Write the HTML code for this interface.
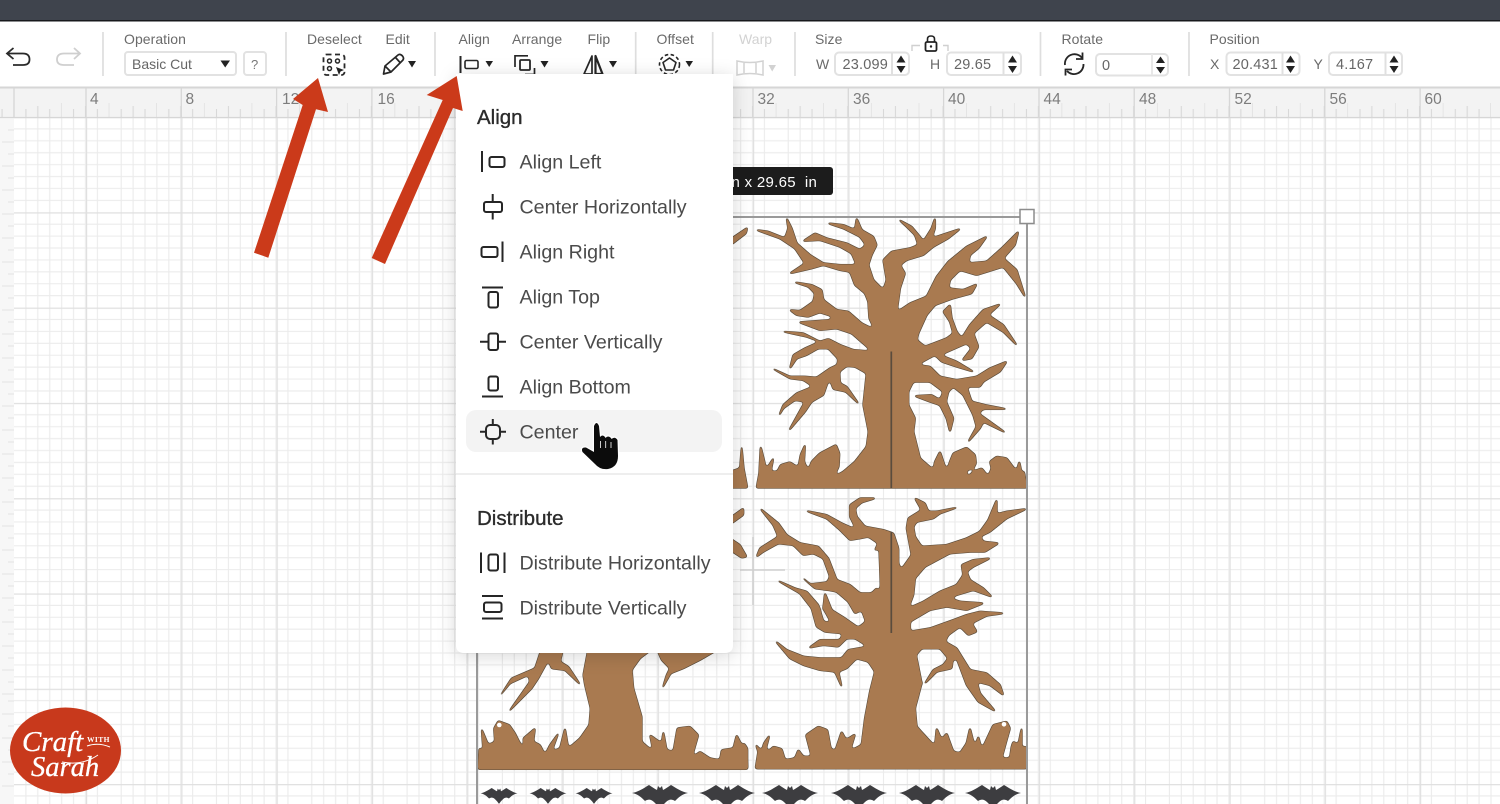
<!DOCTYPE html>
<html><head><meta charset="utf-8"><style>
html,body{margin:0;padding:0;background:#fff;width:1500px;height:804px;overflow:hidden}
svg{display:block;position:absolute;left:0;top:0}
text{font-family:"Liberation Sans",sans-serif}
.l{font-size:14px;letter-spacing:.05px;fill:#6a6a6a}
.v{font-size:14.5px;fill:#666;letter-spacing:.2px}
.r{font-size:15.5px;fill:#7d7d7d}
.m{font-size:19.65px;fill:#4b4b4b}
.t{font-size:20.5px;fill:#2b2b2b;stroke:#2b2b2b;stroke-width:.35px}
.ic{fill:none;stroke:#262626;stroke-width:2}
.box{fill:#fff;stroke:#e2e2e2;stroke-width:2}
.dv{stroke:#dedede;stroke-width:1.7}
</style></head><body>
<svg width="1500" height="804" viewBox="0 0 1500 804" xmlns="http://www.w3.org/2000/svg">
<defs>
<pattern id="g" x="14" y="117" width="95.29" height="95.29" patternUnits="userSpaceOnUse">
<path d="M11.91 0V96M23.82 0V96M35.73 0V96M47.64 0V96M59.56 0V96M71.47 0V96M83.38 0V96M0 11.91H96M0 23.82H96M0 35.73H96M0 47.64H96M0 59.56H96M0 71.47H96M0 83.38H96" stroke="#ebebeb" stroke-width="1.1" fill="none"/>
</pattern>
<pattern id="G" x="86" y="117" width="95.29" height="95.29" patternUnits="userSpaceOnUse">
<path d="M0.6 0V96M0 0.6H96" stroke="#e0e0e0" stroke-width="1.2" fill="none"/>
</pattern>
<pattern id="t" x="14" y="88" width="47.645" height="30" patternUnits="userSpaceOnUse">
<path d="M11.91 21V30M23.82 18V30M35.73 21V30M47.64 15V30" stroke="#d8d8d8" stroke-width="1.1" fill="none"/>
</pattern>
<path id="bat" d="M-28 8C-22 7-16 3-11 0C-8 2-5 4-3 5L-2 1L0 3L2 1L3 5C5 4 8 2 11 0C16 3 22 7 28 8C22 9 18 13 15 16C12 14 9 14 6 17L3 20L0 24L-3 20L-6 17C-9 14-12 14-15 16C-18 13-22 9-28 8Z" fill="#3d3d40"/>
<filter id="sm" x="440" y="190" width="610" height="600" filterUnits="userSpaceOnUse" color-interpolation-filters="sRGB">
<feGaussianBlur in="SourceAlpha" stdDeviation="1.3" result="b"/>
<feComponentTransfer in="b" result="a"><feFuncA type="linear" slope="7" intercept="-2.6"/></feComponentTransfer>
<feFlood flood-color="#56493a" result="dk"/>
<feComposite in="dk" in2="a" operator="in" result="outline"/>
<feMorphology in="a" operator="erode" radius="0.7" result="e"/>
<feFlood flood-color="#a97a50" result="br"/>
<feComposite in="br" in2="e" operator="in" result="body"/>
<feMerge><feMergeNode in="outline"/><feMergeNode in="body"/></feMerge>
</filter>
</defs>

<rect width="1500" height="804" fill="#fff"/>
<rect y="117" width="1500" height="687" fill="url(#g)"/>
<rect y="117" width="1500" height="687" fill="url(#G)"/>
<rect x="0" y="118" width="14" height="686" fill="#f7f7f7"/>
<path d="M8 130H14M2 142H14M8 154H14M2 166H14M8 178H14M2 190H14M8 202H14M2 214H14M8 226H14M2 238H14M8 250H14M2 262H14M8 274H14M2 286H14M8 298H14M2 310H14M8 322H14M2 334H14M8 346H14M2 358H14M8 370H14M2 382H14M8 394H14M2 406H14M8 418H14M2 430H14M8 442H14M2 454H14M8 466H14M2 478H14M8 490H14M2 502H14M8 514H14M2 526H14M8 538H14M2 550H14M8 562H14M2 574H14M8 586H14M2 598H14M8 610H14M2 622H14M8 634H14M2 646H14M8 658H14M2 670H14M8 682H14M2 694H14M8 701H14M2 714H14M8 726H14M2 738H14M8 750H14M2 762H14M8 774H14M2 786H14" stroke="#e3e3e3" stroke-width="1"/>

<path d="M753 537V605M740 570H785" stroke="#cfcfcf" stroke-width="1.4" fill="none"/>

<!-- Trees -->
<g filter="url(#sm)" fill="#a97a50" stroke="#a97a50" stroke-width="1.8" stroke-linejoin="round">
<g transform="translate(740 205) scale(.3333)">
<path stroke-width="5.500" d="M50 848L58 805L62 725L72 765L78 795L100 760L92 800L112 800L122 780L150 772L175 788L182 750L195 720L192 770L205 798L215 770L240 745L288 720L298 745L296 785L280 818L310 800L345 770L380 725L386 680L370 600L380 505L345 485L320 483L298 500L300 535L320 545L355 595L318 560L280 552L268 518L250 570L215 590L195 620L148 675L195 590L165 585L130 610L118 630L130 600L170 565L220 545L190 525L150 520L100 492L150 515L195 515L230 518L270 490L292 480L295 462L265 430L235 430L200 450L170 460L150 490L160 450L195 430L240 410L200 395L130 380L190 385L240 410L265 402L300 420L340 435L398 440L375 420L335 385L290 370L240 375L178 352L270 345L280 335L240 322L205 335L170 330L150 315L180 318L220 290L225 265L205 245L165 232L215 240L245 255L250 285L290 315L325 320L365 355L405 375L388 340L385 290L375 265L345 240L330 200L300 195L250 180L215 190L150 205L195 175L165 130L120 100L50 75L85 80L135 100L145 70L140 40L155 70L170 115L210 150L250 175L300 180L350 180L335 145L300 125L240 105L190 108L225 85L260 100L320 115L360 135L378 120L360 95L310 70L265 55L310 60L345 75L350 40L365 75L400 95L410 120L395 150L385 180L400 225L430 255L440 225L430 165L455 140L510 130L535 120L525 90L500 65L478 45L515 65L540 95L550 110L575 70L585 40L585 70L575 100L620 85L660 72L625 100L580 125L550 150L500 165L480 180L495 205L480 250L470 322L510 295L560 275L590 215L625 170L680 125L740 95L715 130L690 150L685 175L740 170L785 130L835 80L825 120L790 160L830 195L855 275L830 235L790 185L710 210L660 195L630 225L625 250L670 255L710 238L695 265L640 280L585 300L560 330L535 385L530 405L555 425L620 400L640 385L630 350L610 320L630 300L635 340L650 380L665 400L690 360L730 315L780 298L745 330L790 360L830 420L790 380L740 350L700 385L715 425L695 460L668 465L695 430L680 415L600 450L650 470L700 500L650 485L605 470L585 450L530 480L570 485L600 515L650 525L710 515L750 490L800 470L780 500L730 530L720 545L680 545L695 590L735 600L798 612L730 612L715 625L795 682L730 650L720 670L685 710L710 665L700 630L670 570L640 545L625 560L618 590L640 640L630 680L620 640L600 600L570 590L525 573L575 570L600 585L610 560L570 530L520 530L505 560L505 600L525 640L520 680L540 760L580 795L585 770L600 740L610 770L620 800L630 770L640 745L680 728L705 750L708 775L700 790L680 795L680 820L700 800L725 790L745 815L755 790L750 770L770 755L800 760L830 800L838 770L845 805L852 800L860 848Z"/>
<path stroke-width="5" d="M-25 100L22 68L18 85L-25 118ZM-30 848V800L0 790L5 725L11 790L22 848Z"/>
</g>
<g transform="translate(740 495) scale(.3333)">
<path stroke-width="5.500" d="M47 820L55 770L48 750L65 770L72 745L88 722L78 760L85 770L100 755L125 762L135 795L165 790L175 765L190 785L215 785L198 720L235 695L262 705L272 760L285 770L305 710L318 735L345 718L330 768L365 750L375 670L390 590L405 530L385 500L350 490L320 520L295 530L305 575L285 530L240 525L190 510L150 490L108 440L140 465L190 485L240 490L305 490L325 465L385 455L345 430L320 430L295 455L250 450L208 458L240 435L300 435L310 415L255 410L230 395L215 340L180 295L115 258L165 280L200 290L235 330L250 380L275 385L250 340L255 295L275 345L315 370L355 398L378 380L365 345L345 355L325 320L290 290L265 285L225 280L190 250L210 268L262 262L270 245L250 190L220 175L190 180L160 150L115 145L70 170L50 185L60 160L115 125L100 90L62 42L115 85L140 120L180 145L235 155L265 190L290 255L330 270L360 295L395 295L410 280L420 295L422 270L420 210L418 160L405 165L415 145L385 125L360 130L330 135L300 105L260 70L200 48L260 60L305 85L350 105L330 65L330 30L360 10L405 10L365 22L345 40L350 65L375 95L430 105L460 115L475 160L475 205L483 225L515 180L500 100L505 70L545 45L525 10L555 25L565 50L590 50L650 38L600 55L580 70L530 80L520 95L525 125L545 155L620 150L680 130L720 110L745 75L770 15L770 50L760 60L800 50L858 42L800 70L750 110L720 125L730 140L775 145L735 170L690 170L630 175L555 215L525 250L520 300L505 340L550 320L600 290L650 270L670 240L665 210L700 195L750 190L700 215L680 230L690 255L730 280L755 305L700 285L650 300L630 310L660 320L730 325L680 345L620 335L570 345L510 380L510 410L570 400L640 375L680 360L720 350L790 355L740 362L695 385L710 410L685 420L660 395L625 420L615 440L650 460L690 525L740 535L780 570L790 600L750 570L710 560L720 595L765 648L715 620L680 570L650 490L638 495L635 520L590 530L555 565L580 525L610 510L625 490L600 460L545 460L528 480L545 565L525 640L530 695L585 755L590 700L605 735L620 715L640 770L660 775L680 745L690 700L705 760L715 725L725 765L760 690L800 680L810 700L800 735L785 790L810 790L815 755L820 740L835 750L845 700L845 760L858 755L860 820Z"/>
<path stroke-width="5" d="M-30 820V770L5 760L12 745L22 760L22 820ZM-30 130L0 150L20 185L5 188L-30 165ZM-25 65L10 40L10 60L-25 85Z"/>
</g>
<g transform="translate(470 645) scale(.3333)">
<path stroke-width="5" d="M25 372L28 310L40 320L35 252L55 300L75 290L72 250L85 228L118 240L135 265L165 325L160 280L195 250L190 290L210 300L225 330L240 300L265 265L245 320L270 310L285 250L295 310L330 280L358 240L362 190L345 120L340 90L355 10L550 10L510 40L485 75L490 130L515 215L515 290L550 320L540 270L575 295L580 260L590 315L610 320L622 250L660 245L685 270L665 340L690 320L720 340L750 345L755 315L790 310L800 270L815 300L815 335L830 310L832 372Z"/>
<path stroke-width="5" d="M215 10L195 70L125 100L92 150L120 115L175 90L180 110L118 198L185 130L205 100L235 45L245 70L285 75L330 118L295 65L270 50L280 10Z"/>
<path stroke-width="5" d="M560 10L575 45L600 70L590 90L578 128L602 85L640 70L690 45L750 10Z"/>
</g>
</g>
<circle cx="499.300" cy="725" r="2.300" fill="#fff"/>
<circle cx="1004" cy="724.300" r="2.300" fill="#fff"/>
<path d="M891.300 351.500V488M891.300 532V633" stroke="#5a4c3d" stroke-width="1.700" fill="none"/>
<path d="M733 217H1027M1027 217V804M477 640V804" stroke="#9a9a9a" stroke-width="2" fill="none"/>
<rect x="1020" y="209.500" width="14" height="14" fill="#fff" stroke="#8c8c8c" stroke-width="1.500"/>
<rect x="720" y="167" width="113" height="28" rx="3" fill="#1c1c1c"/>
<text x="693" y="187" style="font-size:15px;fill:#fff;letter-spacing:.3px" xml:space="preserve">29.6 in x 29.65  in</text>

<!-- Bats -->
<use href="#bat" transform="translate(499 788) scale(.66)"/>
<use href="#bat" transform="translate(548 788) scale(.66)"/>
<use href="#bat" transform="translate(594 788) scale(.66)"/>
<use href="#bat" transform="translate(660 785)"/>
<use href="#bat" transform="translate(727 785)"/>
<use href="#bat" transform="translate(790 785)"/>
<use href="#bat" transform="translate(859 785)"/>
<use href="#bat" transform="translate(927 785)"/>
<use href="#bat" transform="translate(993 785)"/>

<!-- Ruler -->
<rect y="88" width="1500" height="30" fill="#f3f3f3"/>
<rect y="88" width="1500" height="30" fill="url(#t)"/>
<path d="M14 88V118M86 88V118M181.300 88V118M276.600 88V118M371.900 88V118M753 88V118M848.300 88V118M943.600 88V118M1039 88V118M1134.200 88V118M1229.500 88V118M1324.800 88V118M1420.100 88V118" stroke="#d6d6d6" stroke-width="1.300"/>
<path d="M0 117.500H1500" stroke="#d6d6d6" stroke-width="1.300"/>
<text class="r" x="90" y="104">4</text><text class="r" x="185.500" y="104">8</text><text class="r" x="282" y="104">12</text><text class="r" x="377.500" y="104">16</text><text class="r" x="757.500" y="104">32</text><text class="r" x="853" y="104">36</text><text class="r" x="948" y="104">40</text><text class="r" x="1043.500" y="104">44</text><text class="r" x="1139" y="104">48</text><text class="r" x="1234.500" y="104">52</text><text class="r" x="1329.500" y="104">56</text><text class="r" x="1424.500" y="104">60</text>

<!-- Top bars -->
<rect width="1500" height="88" fill="#fff"/>
<rect width="1500" height="20" fill="#3f444d"/>
<rect y="20" width="1500" height="1.500" fill="#17191c"/>
<rect y="86.500" width="1500" height="2" fill="#d6d6d6"/>

<path class="dv" d="M103 32V76M286 32V76M435 32V76M635.700 32V74M712.700 32V74M795 32V76M1040.500 32V76M1189 32V76"/>

<path d="M13.500 48L7 53.500L13.500 59M7 53.500H23Q29.500 53.500 29.500 59.500Q29.500 65 23 65H13" fill="none" stroke="#2a2a2a" stroke-width="1.800"/>
<path d="M74 48L80 53.500L74 59M80 53.500H64Q57 53.500 57 59.500Q57 65 64 65H74" fill="none" stroke="#cfcfcf" stroke-width="1.800"/>

<!-- Operation -->
<text class="l" x="124" y="44">Operation</text>
<rect class="box" x="125" y="52" width="111" height="23" rx="3"/>
<text x="132" y="69" style="font-size:14px;fill:#666">Basic Cut</text>
<path d="M220.500 60.500H230L225.200 67.500Z" fill="#222"/>
<rect class="box" x="244" y="52" width="22" height="23" rx="3"/>
<text x="251" y="69" style="font-size:13px;fill:#777">?</text>

<!-- Deselect -->
<text class="l" x="307" y="44">Deselect</text>
<rect x="323.500" y="54.500" width="21" height="20.500" rx="3" fill="none" stroke="#2a2a2a" stroke-width="1.800" stroke-dasharray="5 3.500"/>
<circle cx="329.500" cy="61" r="2" class="ic" style="stroke-width:1.500"/><circle cx="337.500" cy="61" r="2" class="ic" style="stroke-width:1.500"/><circle cx="329.500" cy="68.500" r="2" class="ic" style="stroke-width:1.500"/>
<path d="M336 67L344 70L340.500 71.500L339 75Z" fill="#222"/>

<!-- Edit -->
<text class="l" x="385.500" y="44">Edit</text>
<path d="M383.500 74L385 66L398 55Q400 53.500 402.500 56Q404.500 58.500 402.500 60.500L391 72ZM385 66L391 72M395.500 57.500L400.500 63" fill="none" stroke="#262626" stroke-width="1.700" stroke-linejoin="round"/>
<path d="M408 61H416L412 67.500Z" fill="#222"/>

<!-- Align toolbar -->
<text class="l" x="458.500" y="44">Align</text>
<text class="l" x="512" y="44">Arrange</text>
<text class="l" x="587.500" y="44">Flip</text>
<text class="l" x="656.500" y="44">Offset</text>
<text class="l" x="739" y="44" style="fill:#d2d2d2">Warp</text>
<path d="M460.500 56V73" stroke="#262626" stroke-width="2"/>
<rect x="465" y="60.500" width="13" height="8" rx="1.500" class="ic" style="stroke-width:1.600"/>
<path d="M485.500 61H493L489.200 67Z" fill="#222"/>
<path d="M515 67V55.800H528" fill="none" stroke="#262626" stroke-width="1.700"/>
<rect x="520" y="60" width="10" height="10" rx="1" fill="none" stroke="#262626" stroke-width="1.800"/>
<path d="M534.500 68V74.500H525" fill="none" stroke="#262626" stroke-width="1.700"/>
<path d="M540.500 61H548.500L544.500 67.500Z" fill="#222"/>
<path d="M592 56L584 74H592Z" fill="none" stroke="#262626" stroke-width="1.700" stroke-linejoin="round"/>
<path d="M595.500 56L602.500 74H595.500Z" fill="none" stroke="#262626" stroke-width="2.200" stroke-linejoin="round"/>
<path d="M609 61H617L613 67.500Z" fill="#222"/>
<circle cx="669.500" cy="64.500" r="10" fill="none" stroke="#262626" stroke-width="1.600" stroke-dasharray="3.500 2.500"/>
<path d="M669.500 58L676 62.500L673.500 70H665.500L663 62.500Z" fill="none" stroke="#262626" stroke-width="1.600" stroke-linejoin="round"/>
<path d="M685.500 61H693L689.200 67Z" fill="#222"/>
<path d="M737 61Q750 64 763 61V75Q750 72 737 75ZM744 63V73M756 63V73" fill="none" stroke="#d2d2d2" stroke-width="1.500"/>
<path d="M768.500 65H776L772.200 71.500Z" fill="#d2d2d2"/>

<!-- Size -->
<text class="l" x="815" y="44">Size</text>
<text class="l" x="816" y="69">W</text>
<rect class="box" x="835" y="52.500" width="74" height="22.500" rx="4"/>
<text class="v" x="842.500" y="69">23.099</text>
<rect x="888" y="54" width="4" height="20" fill="#fff"/>
<path d="M892 53V75" stroke="#e0e0e0" stroke-width="2"/>
<path d="M896.500 62.500L901 55.500L905.500 62.500ZM896.500 66H905.500L901 73Z" fill="#222"/>
<text class="l" x="930" y="69">H</text>
<rect class="box" x="947" y="52.500" width="74" height="22.500" rx="4"/>
<text class="v" x="954" y="69">29.65</text>
<path d="M1003.500 53V75" stroke="#e0e0e0" stroke-width="2"/>
<path d="M1008 62.500L1012.500 55.500L1017 62.500ZM1008 66H1017L1012.500 73Z" fill="#222"/>
<path d="M912 51V45.500H920M943 45.500H948V51" fill="none" stroke="#d0d0d0" stroke-width="1.400"/>
<rect x="925.500" y="42" width="11" height="9" rx="1.500" fill="none" stroke="#222" stroke-width="1.800"/>
<path d="M927.500 42V39Q927.500 36 931 36Q934.500 36 934.500 39V42" fill="none" stroke="#222" stroke-width="1.600"/>
<circle cx="931" cy="46.500" r="1.200" fill="#222"/>

<!-- Rotate -->
<text class="l" x="1061.500" y="44">Rotate</text>
<path d="M1065 65A9.500 9.500 0 0 1 1082 58M1083.500 64A9.500 9.500 0 0 1 1067 71" fill="none" stroke="#262626" stroke-width="1.800"/>
<path d="M1082.500 52.500V59H1076M1065.500 75.500V69.500H1072" fill="none" stroke="#262626" stroke-width="1.800"/>
<rect class="box" x="1096" y="54" width="72" height="21.500" rx="4"/>
<text class="v" x="1102" y="70">0</text>
<path d="M1152 54V75" stroke="#e8e8e8" stroke-width="2"/>
<path d="M1156 63L1160.500 56.500L1165 63ZM1156 67H1165L1160.500 73.500Z" fill="#222"/>

<!-- Position -->
<text class="l" x="1209.500" y="44">Position</text>
<text class="l" x="1210" y="69">X</text>
<rect class="box" x="1226.500" y="52.500" width="73" height="22.500" rx="4"/>
<text class="v" x="1232.500" y="69">20.431</text>
<path d="M1282.500 53V75" stroke="#e0e0e0" stroke-width="2"/>
<path d="M1286 62.500L1290.500 55.500L1295 62.500ZM1286 66H1295L1290.500 73Z" fill="#222"/>
<text class="l" x="1313.500" y="69">Y</text>
<rect class="box" x="1329" y="52.500" width="73" height="22.500" rx="4"/>
<text class="v" x="1336" y="69">4.167</text>
<path d="M1385.500 53V75" stroke="#e0e0e0" stroke-width="2"/>
<path d="M1389.500 62.500L1394 55.500L1398.500 62.500ZM1389.500 66H1398.500L1394 73Z" fill="#222"/>

<!-- Menu -->
<path d="M456 74H733V645Q733 653 725 653H464Q456 653 456 645Z" fill="#fff" style="filter:drop-shadow(0 3px 9px rgba(0,0,0,.16))"/>
<rect x="466" y="410" width="256" height="42" rx="10" fill="#f3f3f3"/>
<path d="M456 474H733" stroke="#e8e8e8" stroke-width="1.400"/>

<text class="t" x="477" y="124">Align</text>
<text class="m" x="519.500" y="168.500">Align Left</text>
<text class="m" x="519.500" y="213.500">Center Horizontally</text>
<text class="m" x="519.500" y="258.500">Align Right</text>
<text class="m" x="519.500" y="303.500">Align Top</text>
<text class="m" x="519.500" y="348.500">Center Vertically</text>
<text class="m" x="519.500" y="393.500">Align Bottom</text>
<text class="m" x="519.500" y="438.500">Center</text>
<text class="t" x="477" y="525">Distribute</text>
<text class="m" x="519.500" y="569.500">Distribute Horizontally</text>
<text class="m" x="519.500" y="614.500">Distribute Vertically</text>

<g class="ic">
<path d="M482 151V172"/><rect x="489.500" y="157" width="15" height="10" rx="2"/>
<path d="M492.700 194V202M492.700 212V219.500"/><rect x="484" y="202" width="18" height="10" rx="2"/>
<rect x="481.500" y="247" width="16" height="10" rx="2"/><path d="M502.500 241.500V262"/>
<path d="M482 287.500H503"/><rect x="488.500" y="292" width="9.500" height="15.500" rx="2"/>
<path d="M480 341.700H488.500M498 341.700H506"/><rect x="488.500" y="333.500" width="9.500" height="16.500" rx="2"/>
<rect x="488.500" y="376.500" width="9.500" height="14" rx="2"/><path d="M482 396.500H503"/>
<rect x="486" y="425" width="14" height="14" rx="4"/><path d="M480 431.700H486M500 431.700H506M492.800 419V425M492.800 439V444.500"/>
<path d="M481 552.500V573M504.500 552.500V573"/><rect x="488.500" y="554.500" width="9.500" height="16" rx="2"/>
<path d="M482 596H503M482 618.500H503"/><rect x="484" y="602.500" width="17.500" height="9.500" rx="2"/>
</g>

<!-- Hand cursor -->
<path d="M594 426Q596.500 420 599 426L600 437Q602.500 434 605 437L605.500 438Q608 435 611 438L611.500 439Q615 436 617.500 440L618 456Q618 467 608 469Q600 470 595 464L582.500 452Q580.500 447 586 447.500L594 452Z" fill="#0c0c0c" stroke="#fff" stroke-width="2.400" paint-order="stroke"/>
<path d="M600.500 441V448M605.700 441V448M611 442V448" stroke="#fff" stroke-width=".8" fill="none"/>

<!-- Arrows -->
<path d="M254 252.700L302.700 105L293 99L318 78L328 112L316 109.300L268.300 257.700Z" fill="#cb3a1a"/>
<path d="M371.700 258L442.700 100L426.700 95L456.700 76L462.700 111L453 108L385 264Z" fill="#cb3a1a"/>

<!-- Logo -->
<ellipse cx="65.500" cy="750.500" rx="55.500" ry="43" fill="#c8391c"/>
<text x="22" y="751" style="font-family:'Liberation Serif',serif;font-size:29px;font-style:italic;fill:#fff;stroke:#fff;stroke-width:.3px">Craft</text>
<text x="31" y="776" style="font-family:'Liberation Serif',serif;font-size:28.500px;font-style:italic;fill:#fff;stroke:#fff;stroke-width:.3px">Sarah</text>
<text x="87" y="742" style="font-family:'Liberation Serif',serif;font-size:7.500px;font-weight:bold;fill:#fff;letter-spacing:.4px">WITH</text>
<path d="M87 746Q98 742 110 747M62 762Q82 766 98 755" fill="none" stroke="#fff" stroke-width="1"/>
</svg>
</body></html>
